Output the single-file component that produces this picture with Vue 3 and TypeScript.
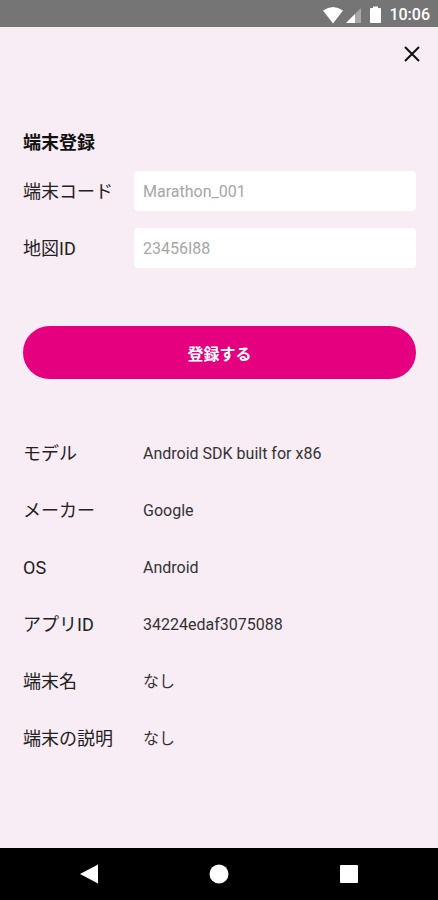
<script setup lang="ts">
import { ref } from 'vue'

interface Detail {
  label: string
  value: string
}

const deviceCode = ref('')
const mapId = ref('')

const details: Detail[] = [
  { label: 'モデル', value: 'Android SDK built for x86' },
  { label: 'メーカー', value: 'Google' },
  { label: 'OS', value: 'Android' },
  { label: 'アプリID', value: '34224edaf3075088' },
  { label: '端末名', value: 'なし' },
  { label: '端末の説明', value: 'なし' },
]
</script>

<template>
  <div class="screen">
    <header class="status">
      <svg class="signals" viewBox="0 0 60 20" aria-hidden="true">
        <path d="M0 5.500Q10 -1.500 20 5.500L10 18.500Z" fill="#fff" />
        <path d="M38 3V18H23Z" fill="#a8a8a8" />
        <path d="M32 9V18H23Z" fill="#fff" />
        <path d="M50 3V1.500H55V3H57Q58 3 58 4V17Q58 18 57 18H48Q47 18 47 17V4Q47 3 48 3Z" fill="#fff" />
      </svg>
      <time>10:06</time>
    </header>

    <main class="content">
      <div class="toolbar">
        <button class="close" type="button" aria-label="閉じる">
          <svg viewBox="0 0 16 16" aria-hidden="true">
            <path d="M1 1L15 15M15 1L1 15" fill="none" stroke="#111" stroke-width="2" />
          </svg>
        </button>
      </div>

      <form @submit.prevent>
        <h1>端末登録</h1>
        <div class="field">
          <label for="device-code">端末コード</label>
          <input id="device-code" v-model="deviceCode" type="text" placeholder="Marathon_001" />
        </div>
        <div class="field">
          <label for="map-id">地図ID</label>
          <input id="map-id" v-model="mapId" type="text" placeholder="23456I88" />
        </div>
        <button class="submit" type="submit">登録する</button>
      </form>

      <dl class="details">
        <div v-for="item in details" :key="item.label" class="row">
          <dt>{{ item.label }}</dt>
          <dd>{{ item.value }}</dd>
        </div>
      </dl>
    </main>

    <nav class="navbar">
      <button type="button" aria-label="戻る">
        <svg viewBox="0 0 20 20" aria-hidden="true"><path d="M19 0.500V19.500L1 10Z" /></svg>
      </button>
      <button type="button" aria-label="ホーム">
        <svg viewBox="0 0 20 20" aria-hidden="true"><circle cx="10" cy="10" r="9.500" /></svg>
      </button>
      <button type="button" aria-label="履歴">
        <svg viewBox="0 0 20 20" aria-hidden="true"><rect x="1" y="1" width="18" height="18" rx="1" /></svg>
      </button>
    </nav>
  </div>
</template>

<style>
body {
  margin: 0;
  background: #f8ecf5;
}
</style>

<style scoped>
.screen {
  min-height: 100vh;
  display: flex;
  flex-direction: column;
  background: #f8ecf5;
  color: #222;
  font-family: Roboto, "Noto Sans CJK JP", sans-serif;
}

.status {
  box-sizing: border-box;
  height: 27px;
  display: flex;
  align-items: center;
  justify-content: flex-end;
  gap: 6px;
  padding: 2px 8px 0;
  background: #757575;
  color: #fff;
  font-size: 16px;
  font-weight: 500;
}

.signals {
  width: 60px;
  height: 20px;
}

.content {
  flex: 1;
  padding: 0 22px 0 23px;
}

.toolbar {
  height: 54px;
  display: flex;
  align-items: center;
  justify-content: flex-end;
  margin-right: -10px;
}

button {
  border: 0;
  padding: 0;
  font-family: inherit;
  cursor: pointer;
}

.close {
  width: 28px;
  height: 28px;
  display: grid;
  place-items: center;
  background: none;
}

.close svg {
  width: 16px;
  height: 16px;
}

h1 {
  margin: 49px 0 15px;
  font-size: 18px;
  line-height: 26px;
  font-weight: 700;
  color: #111;
}

.field {
  display: grid;
  grid-template-columns: 111px 1fr;
  align-items: center;
  margin-bottom: 17px;
}

label,
dt {
  font-size: 18px;
  line-height: 24px;
}

label {
  padding-top: 2px;
}

input {
  box-sizing: border-box;
  width: 100%;
  min-width: 0;
  height: 40px;
  padding: 0 9px;
  border: 0;
  border-radius: 4px;
  background: #fff;
  color: #222;
  font-family: inherit;
  font-size: 16px;
}

input::placeholder {
  color: #a6a6a6;
  opacity: 1;
}

.submit {
  width: 100%;
  height: 53px;
  margin-top: 41px;
  border-radius: 27px;
  background: #e4007f;
  color: #fff;
  font-size: 16px;
  font-weight: 700;
}

.details {
  display: grid;
  gap: 33px;
  margin: 63px 0 31px;
}

.row {
  display: grid;
  grid-template-columns: 120px 1fr;
  align-items: center;
}

dd {
  margin: 0;
  font-size: 16px;
  line-height: 24px;
  color: #333;
}

.navbar {
  height: 52px;
  display: grid;
  grid-template-columns: repeat(3, 130px);
  justify-content: center;
  background: #000;
}

.navbar button {
  display: grid;
  place-items: center;
  background: none;
}

.navbar svg {
  width: 20px;
  height: 20px;
  fill: #fff;
}
</style>
